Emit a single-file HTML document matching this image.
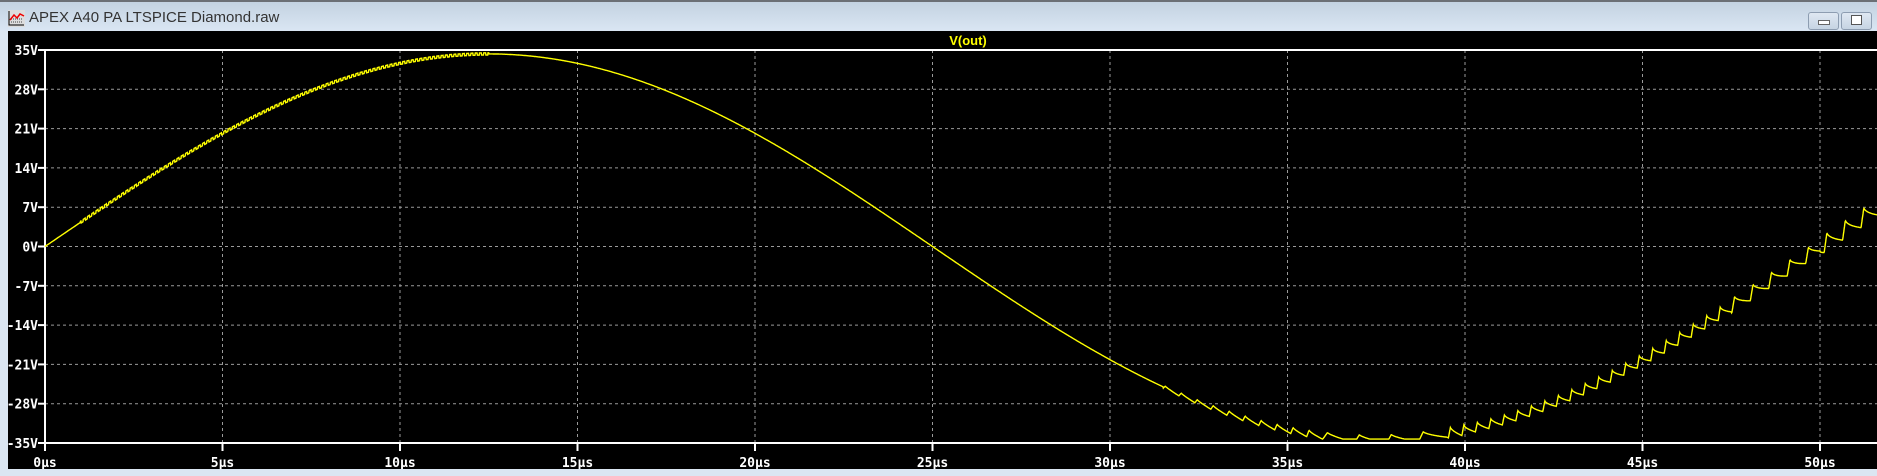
<!DOCTYPE html>
<html><head><meta charset="utf-8"><style>
html,body{margin:0;padding:0;width:1877px;height:476px;overflow:hidden;background:#dbe6f2;font-family:"Liberation Sans",sans-serif}
#tb{position:absolute;left:0;top:0;width:1877px;height:31px;background:linear-gradient(#c3d2e1,#dae6f3);border-top:2px solid #6b6f75;box-sizing:border-box}
#tt{position:absolute;left:29px;top:7px;font-size:15px;color:#333}
.btn{position:absolute;top:10px;width:29px;height:16px;border:1px solid #8d9db1;border-radius:3px;background:linear-gradient(#dfe8f2,#c6d4e3)}
#plot{position:absolute;left:8px;top:31px}
</style></head><body>
<div id="tb">
<svg style="position:absolute;left:8px;top:8px" width="17" height="17"><rect x="0" y="0" width="17" height="17" fill="#ddd"/><path d="M1 1V15H16" stroke="#000" fill="none"/><path d="M3 12H15M3 9H15" stroke="#444" stroke-dasharray="1 1"/><path d="M2 10L6 5L9 8L12 4L16 6" stroke="#e00" stroke-width="1.5" fill="none"/></svg>
<div id="tt">APEX A40 PA LTSPICE Diamond.raw</div>
<div class="btn" style="left:1808px"><div style="position:absolute;left:9px;top:7px;width:10px;height:3px;border:1px solid #666;background:#fff"></div></div>
<div class="btn" style="left:1841px"><div style="position:absolute;left:9px;top:2px;width:9px;height:8px;border:1px solid #555;background:#fff"></div></div>
</div>
<svg id="plot" width="1869" height="438" xmlns="http://www.w3.org/2000/svg">
<rect width="1869" height="438" fill="#000"/>
<g id="grid" stroke="#9a9a9a" stroke-dasharray="3 3" stroke-width="1"></g>
<g id="axes" stroke="#fff" stroke-width="2" fill="none"></g>
<g id="lab" fill="#fff" font-family="'DejaVu Sans Mono','Liberation Mono',monospace" font-weight="bold" font-size="13"></g>
<text x="960" y="14" fill="#ffff00" font-family="'Liberation Sans',sans-serif" font-weight="bold" font-size="13" text-anchor="middle">V(out)</text>
<path id="w" fill="none" stroke="#ffff00" stroke-width="1.4"/>
</svg>
<script>
var ox=-8,oy=-31;
function X(t){return 45+t*35.5+ox}
function Y(v){return 50+(35-v)*393/70+oy}
var g=document.getElementById('grid'),a=document.getElementById('axes'),l=document.getElementById('lab'),h='',ah='',lh='';
for(var v=-28;v<=28;v+=7){h+='<line x1="'+X(0)+'" x2="1869" y1="'+Y(v)+'" y2="'+Y(v)+'"/>';}
for(var t=5;t<=50;t+=5){h+='<line x1="'+X(t)+'" x2="'+X(t)+'" y1="'+Y(35)+'" y2="'+Y(-35)+'"/>';}
g.innerHTML=h;
ah+='<line x1="'+X(0)+'" x2="1869" y1="'+Y(35)+'" y2="'+Y(35)+'"/>';
ah+='<line x1="'+X(0)+'" x2="1869" y1="'+Y(-35)+'" y2="'+Y(-35)+'"/>';
ah+='<line x1="'+X(0)+'" x2="'+X(0)+'" y1="'+Y(35)+'" y2="'+(Y(-35)+8)+'"/>';
for(var v=-35;v<=35;v+=7){ah+='<line x1="'+(X(0)-7)+'" x2="'+X(0)+'" y1="'+Y(v)+'" y2="'+Y(v)+'"/>';lh+='<text x="'+(X(0)-7)+'" y="'+(Y(v)+5)+'" text-anchor="end">'+v+'V</text>';}
for(var t=5;t<=50;t+=5){ah+='<line x1="'+X(t)+'" x2="'+X(t)+'" y1="'+Y(-35)+'" y2="'+(Y(-35)+8)+'"/>';}
for(var t=0;t<=50;t+=5){lh+='<text x="'+X(t)+'" y="'+(Y(-35)+24)+'" text-anchor="middle">'+t+'µs</text>';}
a.innerHTML=ah;l.innerHTML=lh;
var d='',i=0,ph=0,tp=0;
for(var t=0;t<=52;t+=0.01){var v=34.3*Math.sin(2*Math.PI*t/50);
if(t<12.5&&t>1){v+=((i%12)<6?0.2:-0.2);}
if(t>31.5){var p=t<36?0.45:(t<39.5?0.9:(t<47.5?0.38:0.52));ph+=(t-tp)/p;var f=ph%1;
var A=t<40?0.6+(t-31.5)*0.15:(t<47.5?1.6+(t-40)*0.08:(t<50?2.6:3.2));
var s=f<0.15?(-A/2+A*f/0.15):(A/2-A*Math.pow((f-0.15)/0.85,0.7));v+=s;}
tp=t;
if(v<-34.3)v=-34.3;
d+=(i?'L':'M')+X(t).toFixed(1)+' '+Y(v).toFixed(1);i++;}
document.getElementById('w').setAttribute('d',d);
</script>
</body></html>
